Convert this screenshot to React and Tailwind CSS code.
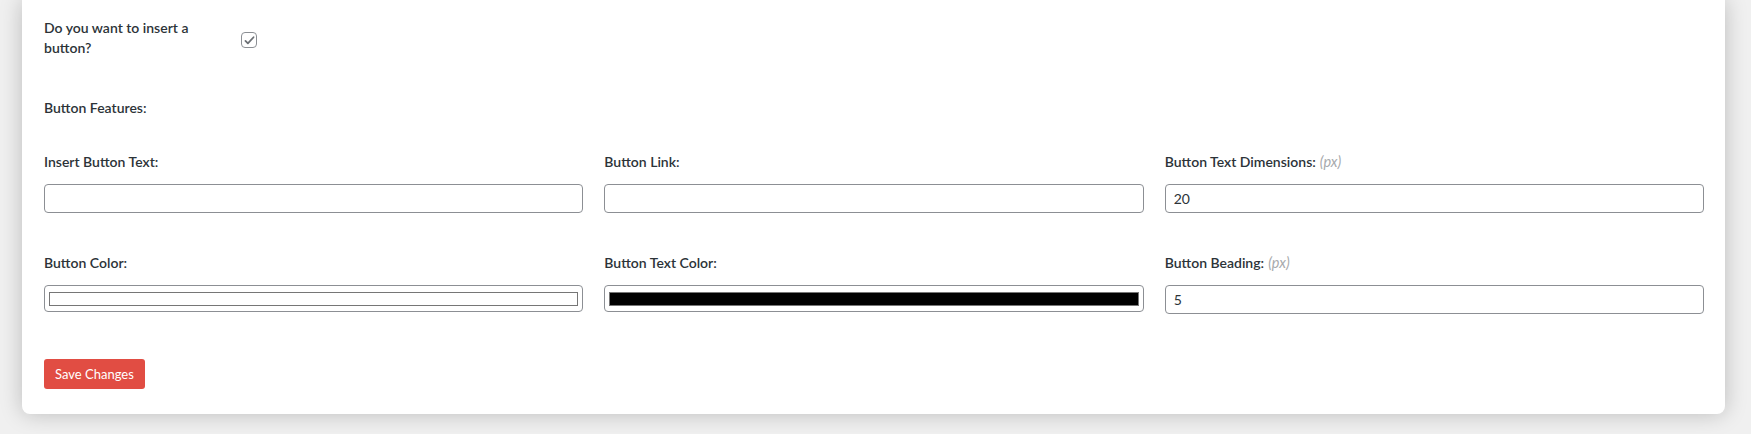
import React from 'react'

const font = { fontFamily: 'Lato, "Noto Sans", sans-serif' }

function Field({ label, unit, children }) {
  return (
    <div className="flex flex-col">
      <label className="h-5 text-[14px] font-semibold leading-5 text-[#2c3338]">
        {label}
        {unit && <em className="ml-1 text-[14.5px] font-normal text-[#a7aaad]">{unit}</em>}
      </label>
      <div className="mt-3">{children}</div>
    </div>
  )
}

function TextInput({ value = '' }) {
  return (
    <input
      type="text"
      defaultValue={value}
      className="block h-[29px] w-full rounded-[4px] border border-[#8c8f94] bg-white px-2 text-[14px] text-[#2c3338] outline-none"
    />
  )
}

function ColorInput({ color }) {
  return (
    <div className="flex h-[27px] w-full items-center rounded-[4px] border border-[#8c8f94] bg-white px-[4px]">
      <div className={'h-[14px] w-full border border-[#767676] ' + (color === 'black' ? 'bg-black' : 'bg-white')} />
    </div>
  )
}

export default function App() {
  return (
    <div className="h-[434px] w-full overflow-hidden bg-[#f0f0f0]" style={font}>
      <div className="ml-[22px] w-[1703px] rounded-b-[8px] bg-white pl-[22px] pr-[21px] pt-[18px] shadow-[0_0_22px_rgba(0,0,0,0.22)]">
        {/* Insert toggle */}
        <div className="flex">
          <div className="w-[197px] text-[14px] font-semibold leading-5 text-[#2c3338]">
            Do you want to insert a
            <br />
            button?
          </div>
          <div className="pt-[14px]">
            <span className="flex h-4 w-4 items-center justify-center rounded-[4px] border border-[#8c8f94] bg-white">
              <svg viewBox="0 0 16 16" className="h-[13px] w-[13px]" fill="none">
                <path d="M3 8.5l3 3 7-7.5" stroke="#6c7075" strokeWidth="2.2" strokeLinecap="round" strokeLinejoin="round" />
              </svg>
            </span>
          </div>
        </div>

        <div className="mt-10 text-[14px] font-semibold leading-5 text-[#2c3338]">Button Features:</div>

        {/* Fields */}
        <div className="mt-[34px] grid grid-cols-3 gap-x-[21px] gap-y-10">
          <Field label="Insert Button Text:">
            <TextInput />
          </Field>
          <Field label="Button Link:">
            <TextInput />
          </Field>
          <Field label="Button Text Dimensions:" unit="(px)">
            <TextInput value="20" />
          </Field>
          <Field label="Button Color:">
            <ColorInput color="white" />
          </Field>
          <Field label="Button Text Color:">
            <ColorInput color="black" />
          </Field>
          <Field label="Button Beading:" unit="(px)">
            <TextInput value="5" />
          </Field>
        </div>

        <div className="pb-[25px] pt-[45px]">
          <button className="h-[30px] rounded-[3px] bg-[#e14d43] px-[11px] text-[13px] leading-[30px] text-white">
            Save Changes
          </button>
        </div>
      </div>
    </div>
  )
}
